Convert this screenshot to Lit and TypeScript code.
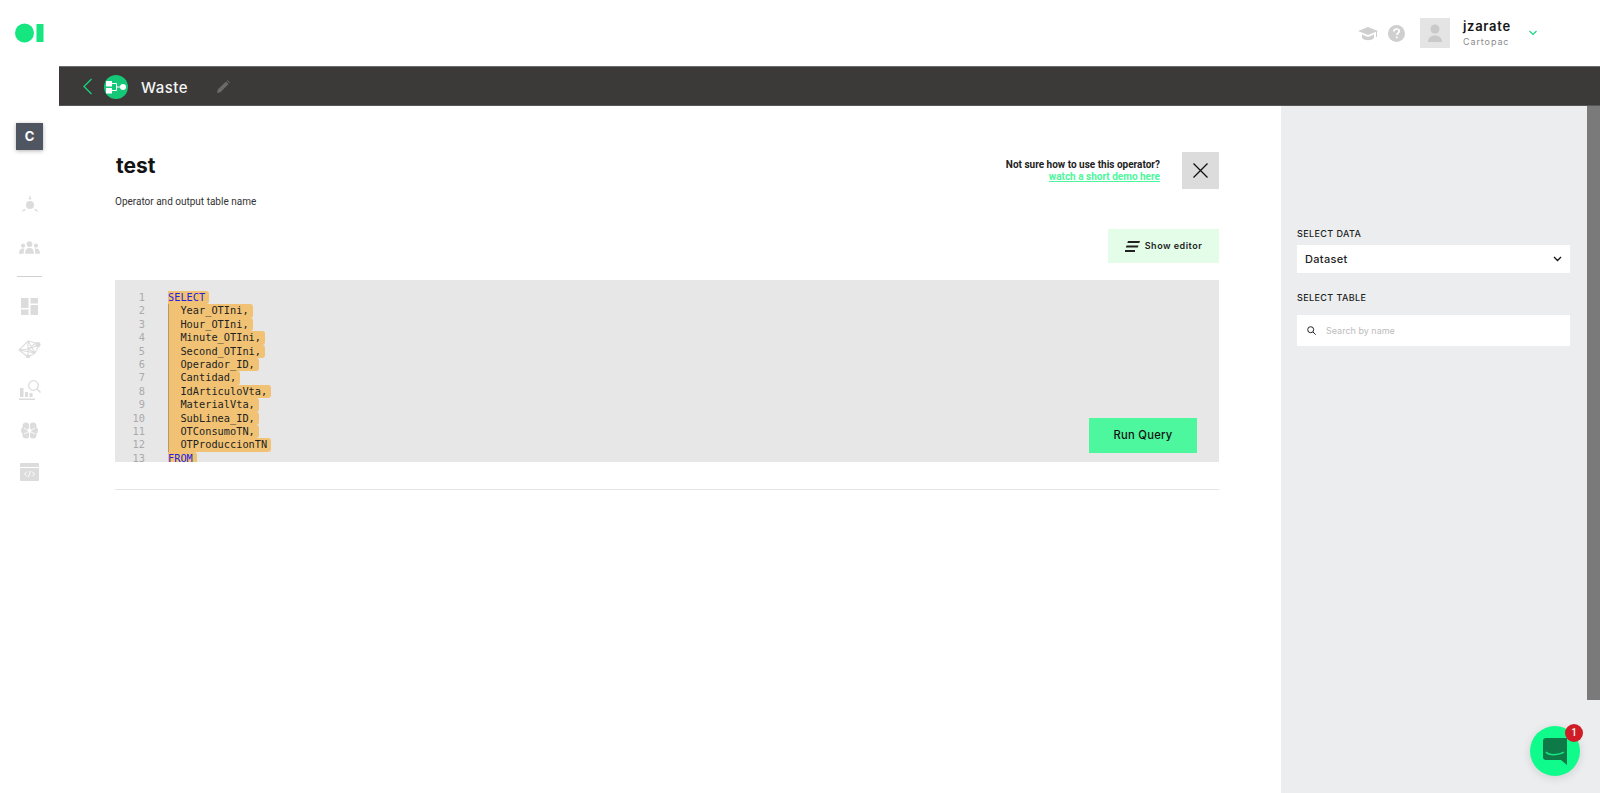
import { LitElement, html, css, svg } from "lit";
import { customElement } from "lit/decorators.js";

const LINES: [string, boolean][] = [
  ["SELECT", true],
  ["  Year_OTIni,", false],
  ["  Hour_OTIni,", false],
  ["  Minute_OTIni,", false],
  ["  Second_OTIni,", false],
  ["  Operador_ID,", false],
  ["  Cantidad,", false],
  ["  IdArticuloVta,", false],
  ["  MaterialVta,", false],
  ["  SubLinea_ID,", false],
  ["  OTConsumoTN,", false],
  ["  OTProduccionTN", false],
  ["FROM", true],
];

const SIDE_ICONS = [
  { h: 26, v: svg`<circle cx="13" cy="13" r="5.2"/><path d="M12.2 1h1.6v3h1.4L13 6.6 10.8 4h1.4zM2 21l2.6-1.6-.7-1.2 3.4.2-1.4 3-.7-1.1L3 22zM24 21l-2.6-1.6.7-1.2-3.4.2 1.4 3 .7-1.1L23 22z"/>` },
  { h: 20, v: svg`<circle cx="13" cy="6" r="3.6"/><path d="M7.5 18c0-5 2-7.5 5.5-7.5S18.500 13 18.500 18z"/><circle cx="5" cy="8" r="2.6"/><path d="M0 18c0-4 1.500-6.500 5-6.500 1 0 1.500.2 1.800.4C6 13.500 5.800 15.500 5.800 18z"/><circle cx="21" cy="8" r="2.600"/><path d="M26 18c0-4-1.500-6.500-5-6.500-1 0-1.500.2-1.800.4.800 1.600 1 3.600 1 6.100z"/>` },
];

@customElement("app-root")
export class AppRoot extends LitElement {
  static styles = css`
    :host {
      display: block;
      position: relative;
      width: 1600px;
      height: 793px;
      overflow: hidden;
      background: #fff;
      font-family: "Roboto", sans-serif;
      color: #111;
    }
    .head {
      height: 66px;
      display: flex;
      align-items: center;
      box-sizing: border-box;
      padding: 0 63px 0 15px;
    }
    .logo { display: block; }
    .head-right { margin-left: auto; display: flex; align-items: center; }
    .cap { margin-right: 10px; }
    .help { margin-right: 15px; }
    .avatar {
      width: 30px; height: 30px; background: #e4e4e4;
      display: flex; align-items: center; justify-content: center;
      margin-right: 13px;
    }
    .who { width: 64px; margin-right: 0; }
    .who b {
      display: block; font: 600 13px/15px "Inter", sans-serif;
      letter-spacing: 0.7px; color: #161616;
    }
    .who span {
      display: block; font: 400 9px/11px "Inter", sans-serif;
      letter-spacing: 0.9px; color: #8b8b8b; margin-top: 2px;
    }
    .head-chev { margin-left: 2px; margin-right: 0; }
    .row { display: flex; height: 727px; }
    .rail {
      width: 59px; flex: none; display: flex; flex-direction: column; align-items: center;
      padding-top: 57px; box-sizing: border-box;
    }
    .tile {
      width: 27px; height: 27px; background: #4f5661; color: #fff;
      font: 700 13px/27px "Inter", sans-serif; text-align: center;
      box-shadow: 0 1px 4px rgba(0,0,0,.3); margin-bottom: 40px; flex: none;
    }
    .rail-icon {
      width: 26px; height: 30px; margin-bottom: 11.3px; flex: none;
      display: flex; align-items: center; justify-content: center;
      fill: #dcdcdc;
    }
    .rail-line { width: 25px; height: 1px; background: #d2d2d2; margin: 3.4px 0 15px; flex: none; }
    .page { flex: 1; min-width: 0; display: flex; flex-direction: column; }
    .bar {
      height: 40px; flex: none; background: #3b3a38; display: flex; align-items: center;
      padding: 1px 0 0 23px; box-sizing: border-box;
      border-top: 1px solid #6b6b6b; border-bottom: 1px solid #555;
    }
    .bar-node { margin-left: 11px; }
    .bar-title {
      margin-left: 13px; color: #f4f4f4; font: 500 15px/20px "Inter", sans-serif;
      letter-spacing: 0.500px; width: 76px; padding-top: 2px;
    }
    .split { flex: 1; display: flex; min-height: 0; }
    .main {
      width: 1222px; flex: none; box-sizing: border-box; padding: 44px 62px 0 56px;
    }
    .top { display: flex; align-items: flex-start; }
    .titles { flex: 1; }
    h1 { margin: 0 0 0 1px; padding-top: 2px; font: 700 21px/28px "Inter", sans-serif; letter-spacing: 0; color: #141414; }
    .sub { margin: 16px 0 0 0; font: 400 10px/12px "Roboto", sans-serif; color: #333; }
    .hint { text-align: right; font: 700 10px/12px "Roboto", sans-serif; margin: 9px 22px 0 0; color: #222; }
    .hint a { display: block; color: #4cf79d; text-decoration: underline; }
    .close {
      width: 37px; height: 37px; background: #dcdcdc; display: flex; margin-top: 2px;
      align-items: center; justify-content: center;
    }
    .tools { display: flex; justify-content: flex-end; margin-top: 21px; }
    .show {
      width: 111px; height: 34px; background: #e3fde9; display: flex; align-items: center;
      justify-content: center; gap: 5px; font: 600 9px/12px "Inter", sans-serif;
      letter-spacing: 0.500px; color: #222;
    }
    .editor {
      position: relative; margin: 17px 0 0 0; height: 182px; background: #e7e7e7;
      overflow: hidden; padding-top: 11px; box-sizing: border-box;
    }
    .line { display: flex; height: 13.4px; font: 10.3px/13.4px "DejaVu Sans Mono", monospace; color: #222; white-space: pre; }
    .num { width: 30px; text-align: right; color: #aaa; margin-right: 23px; flex: none; }
    .code { background: #f1c274; padding-right: 4px; border-radius: 0 3px 3px 0; }
    .kw { color: #2222e0; }
    .guide { box-shadow: inset 1px 0 0 #b69a6a; }
    .run {
      position: absolute; left: 974px; top: 138px; width: 108px; height: 35px;
      background: #4cf79d; color: #111; text-align: center;
      font: 500 11.2px/35px "Inter", sans-serif; letter-spacing: 0.300px;
    }
    .rule { height: 1px; background: #e5e5e5; margin: 27px 0 0 0; }
    .side {
      flex: 1; background: #ecedef; position: relative; box-sizing: border-box;
      padding: 122px 30px 0 16px;
    }
    .scroll { position: absolute; right: 0; top: 0; width: 13px; height: 594px; background: #7a7a7a; }
    label {
      display: block; font: 500 9px/12px "Inter", sans-serif; letter-spacing: 0.400px; color: #222;
    }
    .select {
      height: 28px; margin-top: 5px; background: #fff; display: flex; align-items: center;
      justify-content: space-between; padding: 0 8px; box-sizing: border-box;
      font: 500 11px/14px "Inter", sans-serif; letter-spacing: 0.300px; color: #222;
    }
    .second { margin-top: 19px; }
    .search {
      height: 31px; margin-top: 11px; background: #fff; display: flex; align-items: center;
      padding-left: 10px; gap: 10px; font: 400 9px/12px "Inter", sans-serif; color: #bcbcbc;
    }
    .chat {
      position: absolute; left: 1530px; top: 726px; width: 50px; height: 50px; border-radius: 50%;
      background: #0ffb8b; box-shadow: 0 2px 10px rgba(0,0,0,.12);
      display: flex; align-items: center; justify-content: center;
    }
    .badge {
      position: absolute; left: 35px; top: -2px; width: 18px; height: 18px; border-radius: 50%;
      background: #d01c24; color: #fff; font: 500 10px/18px "Roboto", sans-serif; text-align: center;
    }
  `;

  render() {
    return html`
      <div class="head">
        <svg class="logo" width="30" height="20" viewBox="0 0 30 20" fill="#15e67f">
          <circle cx="9.500" cy="10" r="9.500"/><rect x="21.500" y="1" width="7" height="18"/>
        </svg>
        <div class="head-right">
          <svg class="cap" width="20" height="15" viewBox="0 0 20 15" fill="#cfcfcf">
            <path d="M10 1 0 5l10 4 8-3.200V11h1V5.400L20 5zM4 8.500V12c1.500 1.500 3.500 2.200 6 2.200s4.500-.7 6-2.200V8.500l-6 2.400z"/>
          </svg>
          <svg class="help" width="17" height="17" viewBox="0 0 17 17">
            <circle cx="8.500" cy="8.500" r="8.500" fill="#cfcfcf"/>
            <path d="M5.800 6.500c0-1.600 1.200-2.500 2.700-2.500s2.700.9 2.700 2.300c0 1.900-2.400 1.900-2.400 3.700" fill="none" stroke="#fff" stroke-width="1.700"/>
            <rect x="7.900" y="11.500" width="1.700" height="1.800" fill="#fff"/>
          </svg>
          <div class="avatar">
            <svg width="16" height="18" viewBox="0 0 16 18" fill="#c9c9c9">
              <circle cx="8" cy="5" r="4.500"/><path d="M1 18c0-4 3-6.500 7-6.500s7 2.500 7 6.500z"/>
            </svg>
          </div>
          <div class="who"><b>jzarate</b><span>Cartopac</span></div>
          <svg class="head-chev" width="8" height="6" viewBox="0 0 8 6" fill="none" stroke="#15d67c" stroke-width="1.200">
            <path d="M.5 1 4 4.500 7.500 1"/>
          </svg>
        </div>
      </div>
      <div class="row">
        <nav class="rail">
          <div class="tile">C</div>
          <div class="rail-icon"><svg width="20" height="20" viewBox="0 0 26 26">${SIDE_ICONS[0].v}</svg></div>
          <div class="rail-icon"><svg width="21" height="15" viewBox="0 0 26 18">${SIDE_ICONS[1].v}</svg></div>
          <div class="rail-line"></div>
          <div class="rail-icon">
            <svg width="17" height="17" viewBox="0 0 17 17"><rect width="7.500" height="10"/><rect y="11.500" width="7.500" height="5.500"/><rect x="9.500" width="7.500" height="5.500"/><rect x="9.500" y="7" width="7.500" height="10"/></svg>
          </div>
          <div class="rail-icon">
            <svg width="23" height="19" viewBox="0 0 23 19" fill="none" stroke="#dcdcdc" stroke-width="1.100">
              <path d="M1 11 10 2l8 2 3 2-4 8-7 4zM10 2l0 16M10 2l7 12M1 11l16 3M18 4l-8 6-9 1M21 6l-11 4 7 4"/>
              <circle cx="20" cy="5.500" r="2" fill="#dcdcdc"/><circle cx="10" cy="17.500" r="1.500" fill="#dcdcdc"/>
            </svg>
          </div>
          <div class="rail-icon">
            <svg width="22" height="22" viewBox="0 0 22 22">
              <rect x="1" y="9" width="3.500" height="9"/><rect x="6" y="13" width="3" height="5"/><rect x="10.500" y="14" width="3" height="4"/><rect y="19.500" width="16" height="1.500"/>
              <circle cx="14.500" cy="6.500" r="4.800" fill="none" stroke="#dcdcdc" stroke-width="1.300"/>
              <path d="m18 10 3.500 3.500" stroke="#dcdcdc" stroke-width="1.500"/>
            </svg>
          </div>
          <div class="rail-icon">
            <svg width="17" height="17" viewBox="0 0 17 17">
              <circle cx="5" cy="4" r="3.500"/><circle cx="12" cy="4" r="3.500"/><circle cx="3.500" cy="8.500" r="3.500"/><circle cx="13.500" cy="8.500" r="3.500"/><circle cx="5" cy="13" r="3.500"/><circle cx="12" cy="13" r="3.500"/>
              <path d="M8.500 0v17M3 6l4 2.500M14 6l-4 2.500M3 12l4-2M14 12l-4-2" stroke="#fff" stroke-width=".9"/>
            </svg>
          </div>
          <div class="rail-icon">
            <svg width="19" height="18" viewBox="0 0 19 18">
              <path d="M1 0h17a1 1 0 0 1 1 1v3H0V1a1 1 0 0 1 1-1zM0 5h19v12a1 1 0 0 1-1 1H1a1 1 0 0 1-1-1z"/>
              <path d="M7 8.500 4.500 11 7 13.500M12 8.500l2.500 2.500-2.500 2.500M10.500 8l-2 6" fill="none" stroke="#fff" stroke-width="1"/>
            </svg>
          </div>
        </nav>
        <div class="page">
          <div class="bar">
            <svg width="11" height="17" viewBox="0 0 11 17" fill="none" stroke="#15d67c" stroke-width="1.300"><path d="M9.500 1 2 8.500 9.500 16"/></svg>
            <svg class="bar-node" width="24" height="24" viewBox="0 0 24 24">
              <circle cx="12" cy="12" r="12" fill="#14c878"/>
              <rect x="2" y="6" width="6" height="5.500" fill="#fff"/><rect x="2" y="13" width="6" height="5.500" fill="#fff"/>
              <circle cx="19" cy="12" r="3" fill="#fff"/>
              <path d="M8 8.500h4.500v7H8M12.500 12H16" fill="none" stroke="#fff" stroke-width="1"/>
            </svg>
            <div class="bar-title">Waste</div>
            <svg width="13" height="13" viewBox="0 0 13 13" fill="#6a6a6a"><path d="M0 13l.8-3.400L9 1.400 11.600 4l-8.200 8.200zM9.800.6 10.400 0 13 2.600l-.6.600z"/></svg>
          </div>
          <div class="split">
            <div class="main">
              <div class="top">
                <div class="titles">
                  <h1>test</h1>
                  <p class="sub">Operator and output table name</p>
                </div>
                <div class="hint">Not sure how to use this operator?<a>watch a short demo here</a></div>
                <div class="close">
                  <svg width="17" height="17" viewBox="0 0 17 17" stroke="#111" stroke-width="1.300"><path d="m1.500 1.500 14 14M15.500 1.500l-14 14"/></svg>
                </div>
              </div>
              <div class="tools">
                <div class="show">
                  <svg width="15" height="11" viewBox="0 0 15 11" fill="#222"><path d="M3 0h12l-.7 2H2.300zM1.500 4.500h12l-.7 2H.800zM0 9h10v2H0z"/></svg>
                  Show editor
                </div>
              </div>
              <div class="editor">
                ${LINES.map(
                  ([t, kw], i) => html`<div class="line">
                    <span class="num">${i + 1}</span>
                    <span class="code ${i > 0 && i < 12 ? "guide" : ""}"><span class=${kw ? "kw" : ""}>${t}</span></span>
                  </div>`
                )}
                <div class="run">Run Query</div>
              </div>
              <div class="rule"></div>
            </div>
            <aside class="side">
              <div class="scroll"></div>
              <label>SELECT DATA</label>
              <div class="select">
                Dataset
                <svg width="9" height="6" viewBox="0 0 9 6" fill="none" stroke="#111" stroke-width="1.300"><path d="m1 1 3.500 3.500L8 1"/></svg>
              </div>
              <label class="second">SELECT TABLE</label>
              <div class="search">
                <svg width="9" height="9" viewBox="0 0 9 9" fill="none" stroke="#222" stroke-width="1"><circle cx="3.700" cy="3.700" r="3"/><path d="m6 6 2.700 2.700"/></svg>
                Search by name
              </div>
            </aside>
          </div>
        </div>
      </div>
      <div class="chat">
        <svg width="24" height="27" viewBox="0 0 24 27">
          <path d="M3 0h21v27l-6-5H3a3 3 0 0 1-3-3V3a3 3 0 0 1 3-3z" fill="#0d7a48"/>
          <path d="M3 14c2.500 3.500 13 3.500 18 0" fill="none" stroke="#19e584" stroke-width="1.500"/>
        </svg>
        <div class="badge">1</div>
      </div>
    `;
  }
}
